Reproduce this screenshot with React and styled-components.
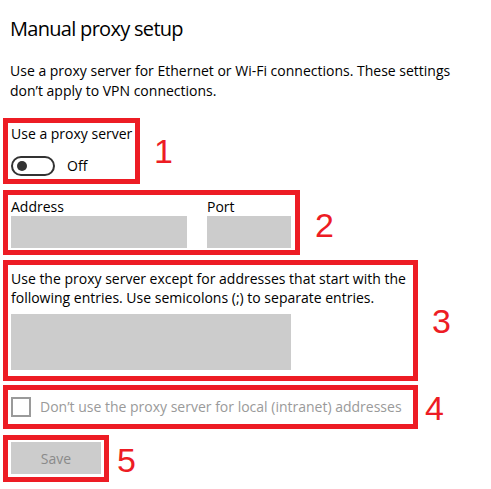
import React from "react";
import styled, { createGlobalStyle } from "styled-components";

const Global = createGlobalStyle`
  html, body { margin: 0; padding: 0; background: #fff; }
  body { font-family: "Open Sans", "Noto Sans", sans-serif; color: #000; }
`;

const Page = styled.div`
  width: 491px;
  height: 489px;
  box-sizing: border-box;
  padding: 15px 0 0 3px;
  display: flex;
  flex-direction: column;
  overflow: hidden;
`;

const Title = styled.h1`
  margin: 0 0 0 7px;
  font-size: 20px;
  font-weight: 400;
  line-height: 28px;
  letter-spacing: -0.7px;
`;

const Desc = styled.p`
  margin: 18px 0 0 7px;
  font-size: 14px;
  line-height: 20px;
  width: 458px;
`;

const Row = styled.div`
  display: flex;
  align-items: flex-start;
  margin-top: ${(p) => p.$mt ?? 6}px;
`;

const Box = styled.div`
  box-sizing: border-box;
  width: ${(p) => p.$w}px;
  height: ${(p) => p.$h}px;
  border: 5px solid #ed1c24;
  padding: ${(p) => p.$pad || "0 0 0 3px"};
  display: flex;
  flex-direction: column;
`;

const Num = styled.div`
  font-family: "Liberation Sans", Arial, sans-serif;
  font-size: 34px;
  line-height: 34px;
  color: #ed1c24;
  margin-left: ${(p) => p.$ml}px;
  margin-top: ${(p) => p.$mt}px;
`;

const Label = styled.div`
  font-size: 14px;
  line-height: 18px;
  color: ${(p) => (p.$disabled ? "#9a9a9a" : "#000")};
`;

const ToggleRow = styled.div`
  display: flex;
  align-items: center;
  gap: 12px;
  margin-top: 13px;
`;

const Toggle = styled.div`
  box-sizing: border-box;
  width: 44px;
  height: 20px;
  border: 2px solid #333;
  border-radius: 10px;
  position: relative;
  &::after {
    content: "";
    position: absolute;
    left: 4px;
    top: 3px;
    width: 10px;
    height: 10px;
    border-radius: 50%;
    background: #333;
  }
`;

const Fields = styled.div`
  display: flex;
  gap: 20px;
`;

const Field = styled.div`
  display: flex;
  flex-direction: column;
`;

const Input = styled.div`
  width: ${(p) => p.$w}px;
  height: ${(p) => p.$h}px;
  background: #cccccc;
`;

const Para = styled.div`
  font-size: 14px;
  line-height: 19px;
  margin-top: 4px;
  margin-bottom: 7px;
`;

const CheckRow = styled.div`
  display: flex;
  align-items: center;
  gap: 9px;
  height: 100%;
`;

const Check = styled.div`
  box-sizing: border-box;
  width: 20px;
  height: 20px;
  border: 2px solid #9a9a9a;
`;

const Button = styled.div`
  width: 90px;
  height: 32px;
  background: #cccccc;
  color: #8a8a8a;
  font-size: 14px;
  display: flex;
  align-items: center;
  justify-content: center;
`;

export default function App() {
  return (
    <>
      <Global />
      <Page>
        <Title>Manual proxy setup</Title>
        <Desc>
          Use a proxy server for Ethernet or Wi-Fi connections. These settings
          don’t apply to VPN connections.
        </Desc>
        <Row $mt={17}>
          <Box $w={137} $h={66} $pad="2px 0 0 3px">
            <Label>Use a proxy server</Label>
            <ToggleRow>
              <Toggle />
              <Label>Off</Label>
            </ToggleRow>
          </Box>
          <Num $ml={14} $mt={16}>1</Num>
        </Row>
        <Row>
          <Box $w={297} $h={65} $pad="3px 0 0 3px">
            <Fields>
              <Field>
                <Label>Address</Label>
                <Input $w={176} $h={32} />
              </Field>
              <Field>
                <Label>Port</Label>
                <Input $w={84} $h={32} />
              </Field>
            </Fields>
          </Box>
          <Num $ml={15} $mt={18}>2</Num>
        </Row>
        <Row $mt={5}>
          <Box $w={415} $h={121} $pad="0 0 0 3px">
            <Para>
              Use the proxy server except for addresses that start with the
              following entries. Use semicolons (;) to separate entries.
            </Para>
            <Input $w={280} $h={56} />
          </Box>
          <Num $ml={14} $mt={44}>3</Num>
        </Row>
        <Row $mt={4}>
          <Box $w={415} $h={44} $pad="0 0 0 3px">
            <CheckRow>
              <Check />
              <Label $disabled>Don’t use the proxy server for local (intranet) addresses</Label>
            </CheckRow>
          </Box>
          <Num $ml={7} $mt={6}>4</Num>
        </Row>
        <Row>
          <Box $w={106} $h={47} $pad="2px 0 0 3px">
            <Button>Save</Button>
          </Box>
          <Num $ml={8} $mt={8}>5</Num>
        </Row>
      </Page>
    </>
  );
}
